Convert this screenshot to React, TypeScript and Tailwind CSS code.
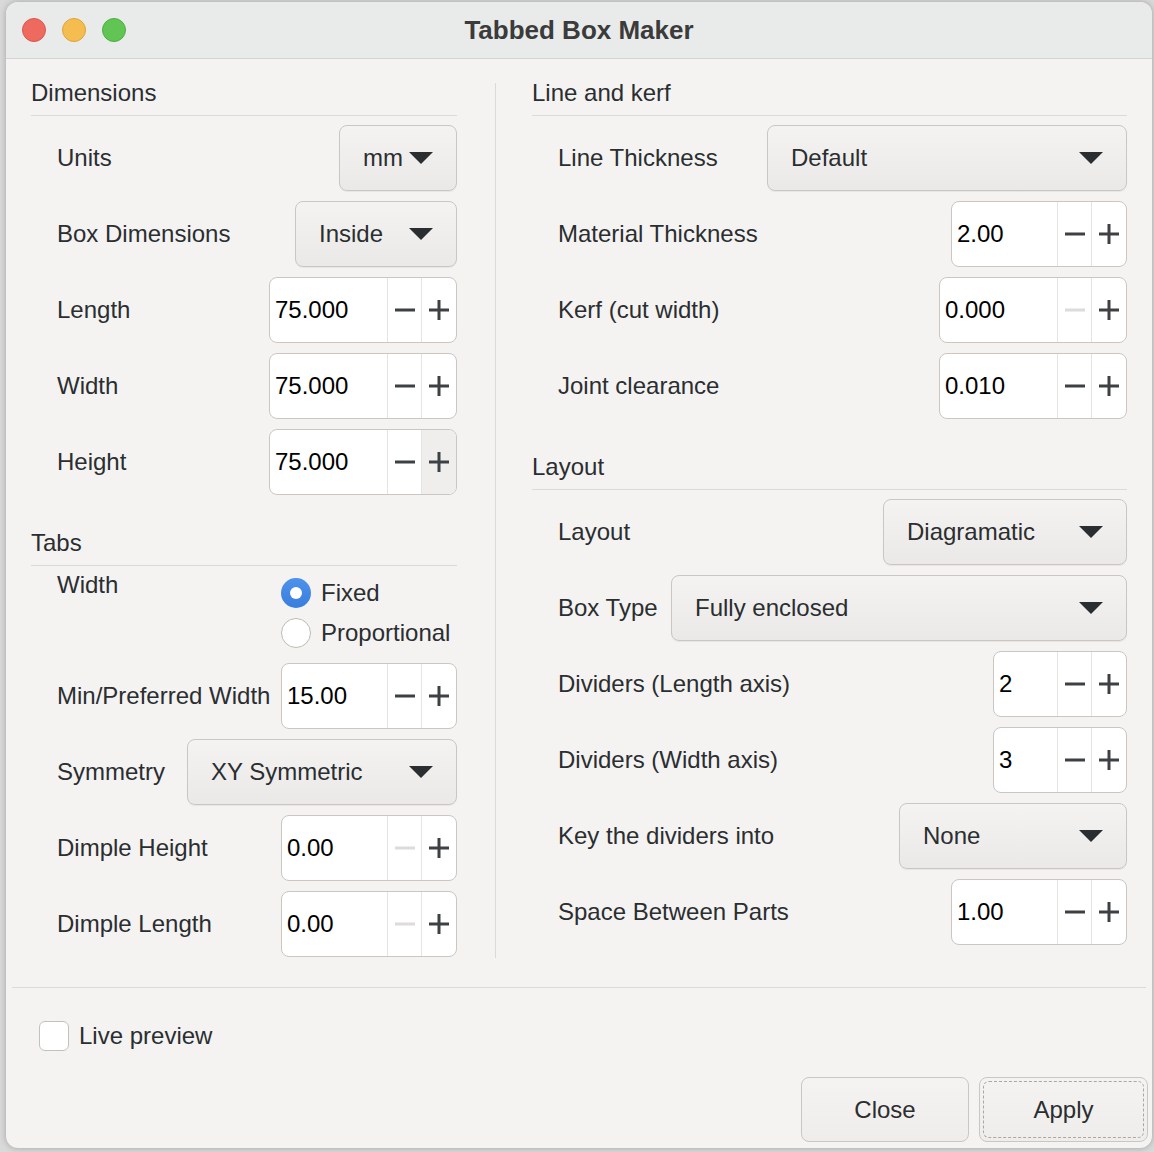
const FONT = { fontFamily: '"Liberation Sans", Arial, Helvetica, sans-serif' };

const Minus = ({ disabled }: { disabled?: boolean }) => (
  <svg width="20" height="20" viewBox="0 0 20 20">
    <rect x="0" y="8.5" width="20" height="3" fill={disabled ? "#dedcda" : "#3e4144"} />
  </svg>
);

const Plus = () => (
  <svg width="20" height="20" viewBox="0 0 20 20">
    <rect x="0" y="8.5" width="20" height="3" fill="#3e4144" />
    <rect x="8.5" y="0" width="3" height="20" fill="#3e4144" />
  </svg>
);

const Arrow = () => (
  <svg width="24" height="12" viewBox="0 0 24 12">
    <polygon points="0,0 24,0 12,12" fill="#2b2e30" />
  </svg>
);

const Spin = ({
  value,
  w,
  minusOff,
  plusHover,
}: {
  value: string;
  w: string;
  minusOff?: boolean;
  plusHover?: boolean;
}) => (
  <div
    className={`${w} h-[66px] flex rounded-[8px] border-[1.5px] border-[#cbc6c2] bg-white overflow-hidden`}
  >
    <div className="flex-1 flex items-center pl-[5px] text-black text-[24px]">{value}</div>
    <div className="w-[34px] border-l border-[#e6e4e2] flex items-center justify-center">
      <Minus disabled={minusOff} />
    </div>
    <div
      className={`w-[35px] border-l border-[#e6e4e2] flex items-center justify-center ${
        plusHover ? "bg-[#efeeed]" : ""
      }`}
    >
      <Plus />
    </div>
  </div>
);

const Select = ({ value, w }: { value: string; w: string }) => (
  <div
    className={`${w} h-[66px] flex items-center justify-between px-[23px] rounded-[8px] border-[1.5px] border-[#cbc6c2] bg-gradient-to-b from-[#f4f3f2] to-[#eae9e8] shadow-[0_1px_1px_rgba(0,0,0,0.06)]`}
  >
    <span className="text-[24px] text-[#2b2e30]">{value}</span>
    <Arrow />
  </div>
);

const Row = ({ label, children }: { label: string; children: React.ReactNode }) => (
  <div className="h-[66px] flex items-center justify-between">
    <span className="pl-[26px] text-[24px] text-[#2b2e30] whitespace-nowrap">{label}</span>
    {children}
  </div>
);

const Heading = ({ title, top }: { title: string; top?: string }) => (
  <div className={`${top ?? ""} h-[37px] pb-[8px] border-b border-[#dcdad8] text-[24px] leading-[28px] text-[#2b2e30]`}>
    {title}
  </div>
);

const Radio = ({ label, on }: { label: string; on?: boolean }) => (
  <div className="h-[34px] flex items-center gap-[10px]">
    {on ? (
      <div className="w-[30px] h-[30px] rounded-full bg-gradient-to-b from-[#4d92ec] to-[#3a7ede] flex items-center justify-center">
        <div className="w-[12px] h-[12px] rounded-full bg-white" />
      </div>
    ) : (
      <div className="w-[30px] h-[30px] rounded-full bg-white border-[1.5px] border-[#bfbab5]" />
    )}
    <span className="text-[24px] text-[#2b2e30]">{label}</span>
  </div>
);

export default function App() {
  return (
    <div className="w-[1154px] h-[1152px] bg-[#d9d9d9] pt-[2px] pl-[6px] overflow-hidden" style={FONT}>
      <div className="w-[1146px] h-[1146px] rounded-[12px] bg-[#f4f3f2] overflow-hidden flex flex-col shadow-[0_0_6px_rgba(0,0,0,0.25)]">
        {/* title bar */}
        <div className="h-[57px] shrink-0 bg-[#e9eaea] border-b border-[#d3d3d3] flex items-center relative">
          <div className="flex items-center gap-[16px] pl-[16px]">
            <div className="w-[24px] h-[24px] rounded-full bg-[#ee6a5f] border border-[#d9574c]" />
            <div className="w-[24px] h-[24px] rounded-full bg-[#f5bd4f] border border-[#dca53c]" />
            <div className="w-[24px] h-[24px] rounded-full bg-[#61c554] border border-[#4fae43]" />
          </div>
          <div className="absolute inset-0 flex items-center justify-center text-[26px] font-bold text-[#3b3b3b]">
            Tabbed Box Maker
          </div>
        </div>

        {/* columns */}
        <div className="flex px-[25px] pt-[20px] h-[897px] shrink-0">
          <div className="w-[426px] flex flex-col">
            <Heading title="Dimensions" />
            <div className="mt-[9px] flex flex-col gap-[10px]">
              <Row label="Units">
                <Select value="mm" w="w-[118px]" />
              </Row>
              <Row label="Box Dimensions">
                <Select value="Inside" w="w-[162px]" />
              </Row>
              <Row label="Length">
                <Spin value="75.000" w="w-[188px]" />
              </Row>
              <Row label="Width">
                <Spin value="75.000" w="w-[188px]" />
              </Row>
              <Row label="Height">
                <Spin value="75.000" w="w-[188px]" plusHover />
              </Row>
            </div>

            <Heading title="Tabs" top="mt-[34px]" />
            <div className="flex items-start justify-between mt-[5px]">
              <span className="pl-[26px] text-[24px] leading-[28px] text-[#2b2e30]">Width</span>
              <div className="w-[176px] mt-[5px] flex flex-col gap-[6px]">
                <Radio label="Fixed" on />
                <Radio label="Proportional" />
              </div>
            </div>
            <div className="mt-[13px] flex flex-col gap-[10px]">
              <Row label="Min/Preferred Width">
                <Spin value="15.00" w="w-[176px]" />
              </Row>
              <Row label="Symmetry">
                <Select value="XY Symmetric" w="w-[270px]" />
              </Row>
              <Row label="Dimple Height">
                <Spin value="0.00" w="w-[176px]" minusOff />
              </Row>
              <Row label="Dimple Length">
                <Spin value="0.00" w="w-[176px]" minusOff />
              </Row>
            </div>
          </div>

          <div className="ml-[38px] mt-[4px] w-px h-[875px] bg-[#dcdad8]" />

          <div className="ml-[36px] flex-1 flex flex-col">
            <Heading title="Line and kerf" />
            <div className="mt-[9px] flex flex-col gap-[10px]">
              <Row label="Line Thickness">
                <Select value="Default" w="w-[360px]" />
              </Row>
              <Row label="Material Thickness">
                <Spin value="2.00" w="w-[176px]" />
              </Row>
              <Row label="Kerf (cut width)">
                <Spin value="0.000" w="w-[188px]" minusOff />
              </Row>
              <Row label="Joint clearance">
                <Spin value="0.010" w="w-[188px]" />
              </Row>
            </div>

            <Heading title="Layout" top="mt-[34px]" />
            <div className="mt-[9px] flex flex-col gap-[10px]">
              <Row label="Layout">
                <Select value="Diagramatic" w="w-[244px]" />
              </Row>
              <Row label="Box Type">
                <Select value="Fully enclosed" w="w-[456px]" />
              </Row>
              <Row label="Dividers (Length axis)">
                <Spin value="2" w="w-[134px]" />
              </Row>
              <Row label="Dividers (Width axis)">
                <Spin value="3" w="w-[134px]" />
              </Row>
              <Row label="Key the dividers into">
                <Select value="None" w="w-[228px]" />
              </Row>
              <Row label="Space Between Parts">
                <Spin value="1.00" w="w-[176px]" />
              </Row>
            </div>
          </div>
        </div>

        {/* bottom separator */}
        <div className="mt-[31px] mx-[6px] h-px bg-[#dcdad8] shrink-0" />

        {/* live preview */}
        <div className="mt-[33px] pl-[33px] flex items-center gap-[10px] h-[30px] shrink-0">
          <div className="w-[30px] h-[30px] rounded-[6px] bg-white border-[1.5px] border-[#c5c0bb]" />
          <span className="text-[24px] text-[#2b2e30]">Live preview</span>
        </div>

        {/* buttons */}
        <div className="mt-[26px] flex justify-end gap-[10px] pr-[4px] shrink-0">
          <div className="w-[168px] h-[65px] rounded-[8px] border-[1.5px] border-[#cbc6c2] bg-gradient-to-b from-[#f4f3f2] to-[#eeedec] flex items-center justify-center text-[24px] text-[#2b2e30]">
            Close
          </div>
          <div className="w-[169px] h-[65px] rounded-[8px] border-[1.5px] border-[#cbc6c2] bg-gradient-to-b from-[#f4f3f2] to-[#eeedec] p-[3px]">
            <div className="w-full h-full rounded-[6px] border-[1.5px] border-dashed border-[#a9a6a3] flex items-center justify-center text-[24px] text-[#2b2e30]">
              Apply
            </div>
          </div>
        </div>
      </div>
    </div>
  );
}
